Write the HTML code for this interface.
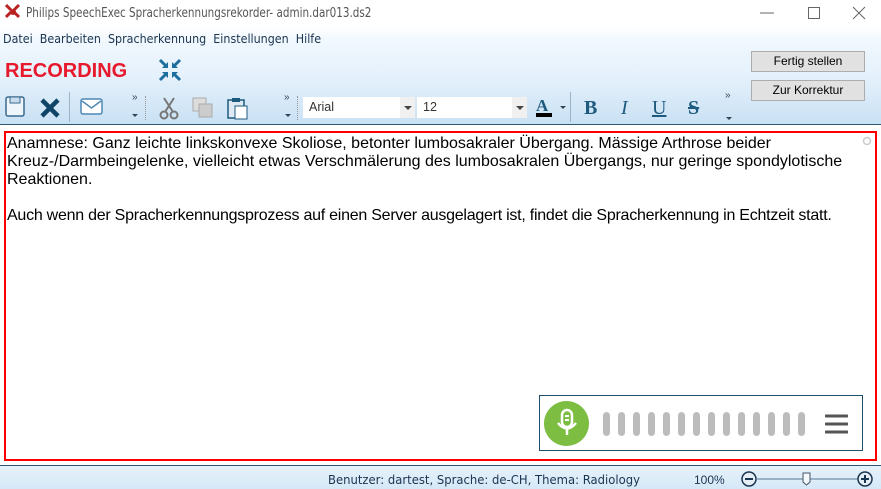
<!DOCTYPE html>
<html><head><meta charset="utf-8"><style>
*{margin:0;padding:0;box-sizing:border-box}
body{width:881px;height:489px;overflow:hidden;position:relative;font-family:"Liberation Sans",sans-serif;background:#fff}
.abs{position:absolute}
#top{left:0;top:0;width:881px;height:125px;background:linear-gradient(#fff 0,#fff 27px,#f1f8fe 40px,#e3f0fb 80px,#c9e1f4 124px)}
#sep{left:0;top:124px;width:881px;height:1px;background:#2f5876}
.title{left:26px;top:6px;font-size:13px;color:#555;font-family:"DejaVu Sans",sans-serif;transform:scaleX(.80);transform-origin:left;white-space:nowrap}
.menu{left:3px;top:31px;font-size:12.5px;color:#1a3550;font-family:"DejaVu Sans",sans-serif;transform:scaleX(.89);transform-origin:left;white-space:nowrap}
.rec{left:5px;top:60px;font-size:20px;font-weight:bold;color:#e8192c;letter-spacing:0}
.btn{width:114px;height:21px;background:#e1e1e1;border:1px solid #adadad;font-size:12px;text-align:center;line-height:19px;color:#000}
.combo{height:21px;background:#fff;font-size:12.5px;line-height:21px;padding-left:6px;color:#333}
.dd{position:absolute;right:0;top:0;width:15px;height:21px;background:#f0f0f0}
.dd:after{content:"";position:absolute;left:4px;top:9px;border-left:4px solid transparent;border-right:4px solid transparent;border-top:4px solid #444}
#box{left:4px;top:131px;width:873px;height:330px;border:2px solid #f00}
#txt{left:7px;top:135px;font-size:16px;line-height:18px;color:#000;width:860px}
#status{left:0;top:465px;width:881px;height:24px;background:linear-gradient(#e7f2fb,#d5e8f7);border-top:1px solid #2f5876}
.fmt{font-family:"Liberation Serif",serif;font-size:20px;font-weight:bold;color:#1e5a7e}
.vsep{width:1px;height:30px;background:#9db4c8}
.bar{position:absolute;top:412px;width:7px;height:24px;border-radius:4px;background:#bcbcbc}
</style></head><body>
<div id="top" class="abs"></div>
<div id="sep" class="abs"></div>
<svg class="abs" style="left:5px;top:4px" width="16" height="16"><path d="M1 1L6 6M14 1L9 6M1 13L6 8M14 13L9 8" stroke="#b22" stroke-width="3"/><circle cx="8" cy="8" r="3" fill="#b22"/></svg>
<div class="abs title">Philips SpeechExec Spracherkennungsrekorder- admin.dar013.ds2</div>
<svg class="abs" style="left:760px;top:6px" width="115" height="14"><path d="M0 7H14" stroke="#666"/><rect x="48.5" y="1.5" width="11" height="11" fill="none" stroke="#666"/><path d="M93 1L105 13M105 1L93 13" stroke="#666"/></svg>
<div class="abs menu">Datei&nbsp; Bearbeiten&nbsp; Spracherkennung&nbsp; Einstellungen&nbsp; Hilfe</div>
<div class="abs rec">RECORDING</div>
<svg class="abs" style="left:158px;top:58px" width="24" height="24"><g stroke="#1e6e9e" stroke-width="3" fill="none"><path d="M2 2L9 9M15 9L22 2M2 22L9 15M15 15L22 22"/></g><g fill="#1e6e9e"><path d="M10 10H4L10 4Z M14 10H20L14 4Z M10 14H4L10 20Z M14 14H20L14 20Z"/></g></svg>
<div class="abs btn" style="left:751px;top:51px">Fertig stellen</div>
<div class="abs btn" style="left:751px;top:80px">Zur Korrektur</div>
<svg class="abs" style="left:5px;top:96px" width="20" height="22"><rect x="1" y="1" width="18" height="19" rx="2" fill="#eef5fb" stroke="#3a6a8e" stroke-width="1.5"/><rect x="5" y="1" width="10" height="6" fill="#c8dced" stroke="#3a6a8e"/></svg>
<svg class="abs" style="left:39px;top:97px" width="22" height="22"><path d="M3 3L19 19M19 3L3 19" stroke="#0e4465" stroke-width="4.5"/></svg>
<div class="abs vsep" style="left:69px;top:92px"></div>
<svg class="abs" style="left:80px;top:98px" width="23" height="18"><rect x="1" y="1" width="21" height="15" rx="2" fill="#fff" stroke="#4d88b5" stroke-width="1.5"/><path d="M2 3L11.5 10L21 3" stroke="#4d88b5" fill="none" stroke-width="1.5"/></svg>
<div class="abs" style="left:132px;top:92px;font-size:10px;color:#345">»</div>
<div class="abs" style="left:132px;top:114px;border-left:3px solid transparent;border-right:3px solid transparent;border-top:3px solid #345"></div>
<div class="abs" style="left:145px;top:96px;width:1px;height:24px;border-left:1px dotted #999"></div>
<svg class="abs" style="left:158px;top:96px" width="22" height="24"><path d="M6 2L15 16M16 2L7 16" stroke="#777" stroke-width="2"/><circle cx="6" cy="19" r="3.5" fill="none" stroke="#777" stroke-width="2"/><circle cx="16" cy="19" r="3.5" fill="none" stroke="#777" stroke-width="2"/></svg>
<svg class="abs" style="left:192px;top:97px" width="22" height="22"><rect x="1" y="1" width="13" height="13" fill="#ddd" stroke="#aaa"/><rect x="7" y="7" width="13" height="13" fill="#ccc" stroke="#aaa"/></svg>
<svg class="abs" style="left:227px;top:96px" width="22" height="24"><rect x="1" y="4" width="16" height="18" fill="#dde9f3" stroke="#1e5a7e" stroke-width="1.5"/><rect x="5" y="2" width="8" height="4" fill="#1e5a7e"/><rect x="8" y="10" width="12" height="13" fill="#fff" stroke="#1e5a7e"/></svg>
<div class="abs" style="left:284px;top:92px;font-size:10px;color:#345">»</div>
<div class="abs" style="left:285px;top:114px;border-left:3px solid transparent;border-right:3px solid transparent;border-top:3px solid #345"></div>
<div class="abs" style="left:297px;top:96px;width:1px;height:24px;border-left:1px dotted #999"></div>
<div class="abs combo" style="left:303px;top:97px;width:112px">Arial<div class="dd"></div></div>
<div class="abs combo" style="left:417px;top:97px;width:110px">12<div class="dd"></div></div>
<div class="abs" style="left:536px;top:96px;font-family:'Liberation Serif',serif;font-weight:bold;font-size:17px;color:#1e5a7e">A</div>
<div class="abs" style="left:536px;top:113px;width:16px;height:4px;background:#000"></div>
<div class="abs" style="left:560px;top:106px;border-left:3px solid transparent;border-right:3px solid transparent;border-top:3px solid #345"></div>
<div class="abs vsep" style="left:570px;top:92px"></div>
<div class="abs fmt" style="left:584px;top:97px">B</div>
<div class="abs fmt" style="left:621px;top:97px;font-style:italic;font-weight:normal">I</div>
<div class="abs fmt" style="left:652px;top:97px;font-weight:normal;text-decoration:underline">U</div>
<div class="abs fmt" style="left:688px;top:97px;text-decoration:line-through">S</div>
<div class="abs" style="left:725px;top:90px;font-size:10px;color:#345">»</div>
<div class="abs" style="left:726px;top:117px;border-left:3px solid transparent;border-right:3px solid transparent;border-top:3px solid #345"></div>
<div id="box" class="abs"></div>
<div id="txt" class="abs">Anamnese: Ganz leichte linkskonvexe Skoliose, betonter lumbosakraler Übergang. Mässige Arthrose beider<br>Kreuz-/Darmbeingelenke, vielleicht etwas Verschmälerung des lumbosakralen Übergangs, nur geringe spondylotische<br>Reaktionen.<br><br><span style="letter-spacing:-0.25px">Auch wenn der Spracherkennungsprozess auf einen Server ausgelagert ist, findet die Spracherkennung in Echtzeit statt.</span></div>
<svg class="abs" style="left:862px;top:136px" width="10" height="10"><circle cx="5" cy="5" r="3.5" fill="none" stroke="#ccc" stroke-width="1.5"/></svg>
<div class="abs" style="left:539px;top:395px;width:324px;height:56px;border:1px solid #1e4f6e;background:#fff"></div>
<div class="abs" style="left:544px;top:401px;width:45px;height:45px;border-radius:50%;background:#7cbd42"></div>
<svg class="abs" style="left:554px;top:408px" width="26" height="32"><rect x="8" y="2" width="10" height="17" rx="5" fill="none" stroke="#fff" stroke-width="2.5"/><path d="M11 8H15M11 12H15" stroke="#fff" stroke-width="2"/><path d="M4 15Q13 26 22 15M13 21V27" stroke="#fff" stroke-width="2.5" fill="none"/></svg>
<div class="bar" style="left:603px"></div><div class="bar" style="left:618px"></div><div class="bar" style="left:633px"></div><div class="bar" style="left:648px"></div><div class="bar" style="left:663px"></div><div class="bar" style="left:678px"></div><div class="bar" style="left:693px"></div><div class="bar" style="left:708px"></div><div class="bar" style="left:723px"></div><div class="bar" style="left:738px"></div><div class="bar" style="left:753px"></div><div class="bar" style="left:768px"></div><div class="bar" style="left:783px"></div><div class="bar" style="left:798px"></div>
<svg class="abs" style="left:825px;top:414px" width="23" height="20"><path d="M1 2H22M1 10H22M1 18H22" stroke="#555" stroke-width="3" stroke-linecap="round"/></svg>
<div id="status" class="abs"></div>
<div class="abs" style="left:328px;top:472px;font-size:12.5px;color:#1a3550;font-family:'DejaVu Sans',sans-serif;transform:scaleX(.93);transform-origin:left;white-space:nowrap">Benutzer: dartest, Sprache: de-CH, Thema: Radiology</div>
<div class="abs" style="left:694px;top:473px;font-size:12px;color:#1a3550">100%</div>
<svg class="abs" style="left:740px;top:470px" width="135" height="18"><circle cx="9" cy="9" r="7" fill="#e6eef5" stroke="#1a3550" stroke-width="1.5"/><path d="M5 9H13" stroke="#1a3550" stroke-width="2"/><path d="M16 9H118" stroke="#5a7890"/><path d="M63 3H70V12L66.5 15L63 12Z" fill="#f4f8fb" stroke="#456"/><circle cx="125" cy="9" r="7" fill="#e6eef5" stroke="#1a3550" stroke-width="1.5"/><path d="M121 9H129M125 5V13" stroke="#1a3550" stroke-width="2"/></svg>
</body></html>
